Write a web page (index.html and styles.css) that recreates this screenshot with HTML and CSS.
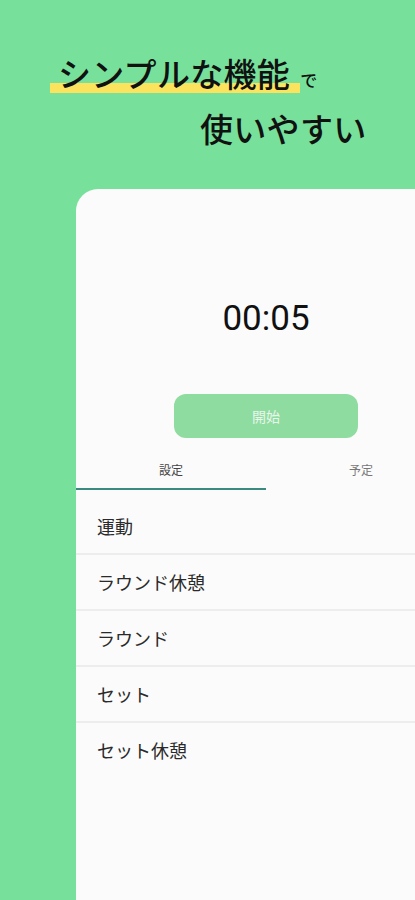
FILE: index.html
```html
<!DOCTYPE html>
<html lang="ja">
<head>
  <meta charset="UTF-8" />
  <meta name="viewport" content="width=device-width, initial-scale=1.0" />
  <title>インターバルタイマー</title>
  <link rel="stylesheet" href="styles.css">
</head>
<body>
  <div class="hero">
    <div class="line line-1">
      <span class="mark">シンプルな機能</span><span class="small">で</span>
    </div>
    <div class="line line-2">使いやすい</div>
  </div>
  <div class="card">
    <div class="timer">00:05</div>
    <button class="start">開始</button>
    <div class="tabs">
      <div class="tab active">設定</div>
      <div class="tab">予定</div>
    </div>
    <ul class="rows">
      <li>運動</li>
      <li>ラウンド休憩</li>
      <li>ラウンド</li>
      <li>セット</li>
      <li>セット休憩</li>
    </ul>
  </div>
</body>
</html>
```

FILE: styles.css
```css
html, body {
  height: 100%;
}
body {
  margin: 0;
  background-color: #77e19b;
  font-family: "Noto Sans CJK JP", "Noto Sans", sans-serif;
  color: #111;
  overflow: hidden;
}
.hero {
  padding-top: 53px;
  height: 136px;
}
.line {
  font-size: 33px;
  font-weight: 500;
  letter-spacing: 0.3px;
  line-height: 40px;
  white-space: nowrap;
}
.line-1 {
  display: flex;
  align-items: baseline;
  padding-left: 50px;
}
.mark {
  display: inline-block;
  height: 40px;
  padding: 0 10px 0 8px;
  background: linear-gradient(to bottom, transparent 30px, #fbe35e 30px, #fbe35e 40px);
}
.small {
  font-size: 17px;
  font-weight: 500;
}
.line-2 {
  padding-left: 200px;
  margin-top: 8px;
}
.card {
  margin-left: 76px;
  width: 380px;
  height: 711px;
  background: #fbfbfb;
  border-radius: 22px 22px 0 0;
  display: flex;
  flex-direction: column;
  align-items: center;
}
.timer {
  margin-top: 110px;
  font-family: Roboto, "Liberation Sans", sans-serif;
  font-size: 35px;
  line-height: 40px;
  color: #111;
}
.start {
  margin-top: 55px;
  width: 184px;
  height: 44px;
  border: none;
  border-radius: 12px;
  background: #8edc9f;
  color: #e8f6ec;
  font-family: "Noto Sans CJK JP", sans-serif;
  font-size: 14px;
}
.tabs {
  margin-top: 12px;
  width: 100%;
  display: flex;
}
.tab {
  flex: 1;
  height: 38px;
  line-height: 40px;
  text-align: center;
  font-size: 12px;
  color: #777;
  border-bottom: 2px solid transparent;
}
.tab.active {
  color: #444;
  border-bottom-color: #3b8a7f;
}
.rows {
  list-style: none;
  margin: 9px 0 0;
  padding: 0;
  width: 100%;
}
.rows li {
  height: 54px;
  line-height: 54px;
  padding-left: 21px;
  font-size: 18px;
  color: #2a2a2a;
  border-bottom: 2px solid #ededed;
}
.rows li:last-child {
  border-bottom: none;
}
```
